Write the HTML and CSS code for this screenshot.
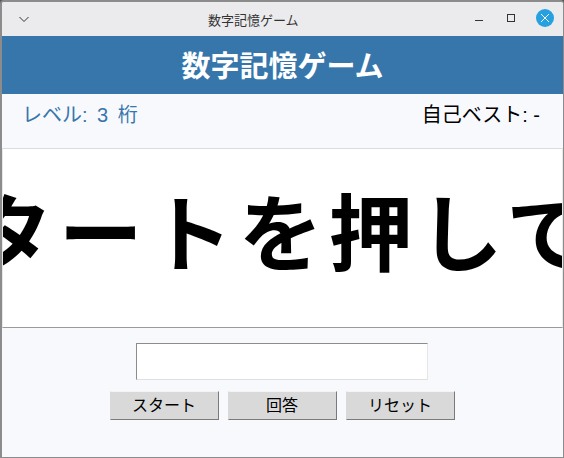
FILE: index.html
```html
<!DOCTYPE html>
<html lang="ja">
<head>
    <meta charset="UTF-8">
    <meta name="viewport" content="width=device-width, initial-scale=1.0">
    <title>数字記憶ゲーム</title>
    <link rel="stylesheet" href="styles.css">
</head>
<body>
    <div class="window">
        <div class="titlebar">
            <svg class="title-menu" width="12" height="12" viewBox="0 0 12 12">
                <path d="M1.5 4 L6 8.5 L10.5 4" fill="none" stroke="#333" stroke-width="1"/>
            </svg>
            <span class="title-text">数字記憶ゲーム</span>
            <div class="title-buttons">
                <svg width="12" height="12" viewBox="0 0 12 12">
                    <path d="M1 8.5 H9" stroke="#333" stroke-width="1"/>
                </svg>
                <svg width="12" height="12" viewBox="0 0 12 12">
                    <rect x="2.5" y="2.5" width="7" height="7" fill="none" stroke="#333" stroke-width="1"/>
                </svg>
                <span class="close-button">
                    <svg width="10" height="10" viewBox="0 0 10 10">
                        <path d="M1 1 L9 9 M9 1 L1 9" stroke="#fff" stroke-width="1"/>
                    </svg>
                </span>
            </div>
        </div>

        <header class="app-header">数字記憶ゲーム</header>

        <div class="status">
            <span class="level">レベル: 3 桁</span>
            <span class="best">自己ベスト: -</span>
        </div>

        <div class="display">
            <span class="display-text">スタートを押してね</span>
        </div>

        <div class="controls">
            <input class="answer" type="text">
            <div class="buttons">
                <button class="action-button">スタート</button>
                <button class="action-button">回答</button>
                <button class="action-button">リセット</button>
            </div>
        </div>
    </div>
</body>
</html>
```

FILE: styles.css
```css
html, body {
    margin: 0;
    padding: 0;
    background-color: #555;
}
body {
    font-family: "Liberation Sans", "Noto Sans CJK JP", sans-serif;
}
.window {
    width: 564px;
    height: 458px;
    box-sizing: border-box;
    display: flex;
    flex-direction: column;
    overflow: hidden;
    background-color: #f8f9fd;
    border: 2px solid #8c8c8c;
    border-right-width: 1px;
    border-bottom-width: 1px;
    border-radius: 4px 4px 0 0;
}
.titlebar {
    height: 34px;
    flex: none;
    display: flex;
    align-items: center;
    position: relative;
    background-color: #ebebed;
    color: #333;
    font-size: 13px;
}
.title-menu {
    margin-left: 16px;
}
.title-text {
    position: absolute;
    left: 206px;
    white-space: nowrap;
}
.title-buttons {
    margin-left: auto;
    margin-right: 9px;
    margin-bottom: 2px;
    display: flex;
    align-items: center;
    gap: 19px;
}
.close-button {
    width: 18px;
    height: 18px;
    border-radius: 50%;
    background-color: #26a1e0;
    display: flex;
    align-items: center;
    justify-content: center;
}
.app-header {
    height: 58px;
    flex: none;
    box-sizing: border-box;
    padding-bottom: 3px;
    display: flex;
    align-items: center;
    justify-content: center;
    background-color: #3776ab;
    color: white;
    font-size: 29px;
    font-weight: bold;
}
.status {
    height: 54px;
    flex: none;
    box-sizing: border-box;
    padding: 0 23px 0 20px;
    display: flex;
    align-items: flex-start;
    justify-content: space-between;
    font-size: 20px;
    line-height: 42px;
}
.level {
    color: #3776ab;
    word-spacing: 4px;
}
.best {
    color: black;
}
.display {
    height: 180px;
    flex: none;
    box-sizing: border-box;
    display: flex;
    align-items: center;
    justify-content: center;
    overflow: hidden;
    background-color: white;
    border: 1px solid;
    border-color: #dcdcdc #e8e8e8 #9a9a9a #e8e8e8;
}
.display-text {
    flex: none;
    white-space: nowrap;
    font-size: 84px;
    line-height: 1;
    font-weight: bold;
    letter-spacing: 6px;
    color: black;
    margin-bottom: 4px;
}
.controls {
    display: flex;
    flex-direction: column;
    align-items: center;
    padding-top: 15px;
    gap: 11px;
}
.answer {
    width: 292px;
    height: 37px;
    margin-right: 2px;
    box-sizing: border-box;
    padding: 0;
    background-color: white;
    border: 1px solid;
    border-color: #8c8c8c #e6e6e6 #e0e0e0 #8c8c8c;
}
.buttons {
    display: flex;
    gap: 9px;
    margin-right: 1px;
}
.action-button {
    width: 109px;
    height: 29px;
    padding: 0 0 3px;
    box-sizing: border-box;
    background-color: #d9d9d9;
    border: 1px solid;
    border-color: #f4f4f4 #7a7a7a #7a7a7a #d9d9d9;
    color: black;
    font-family: inherit;
    font-size: 16px;
}
```
